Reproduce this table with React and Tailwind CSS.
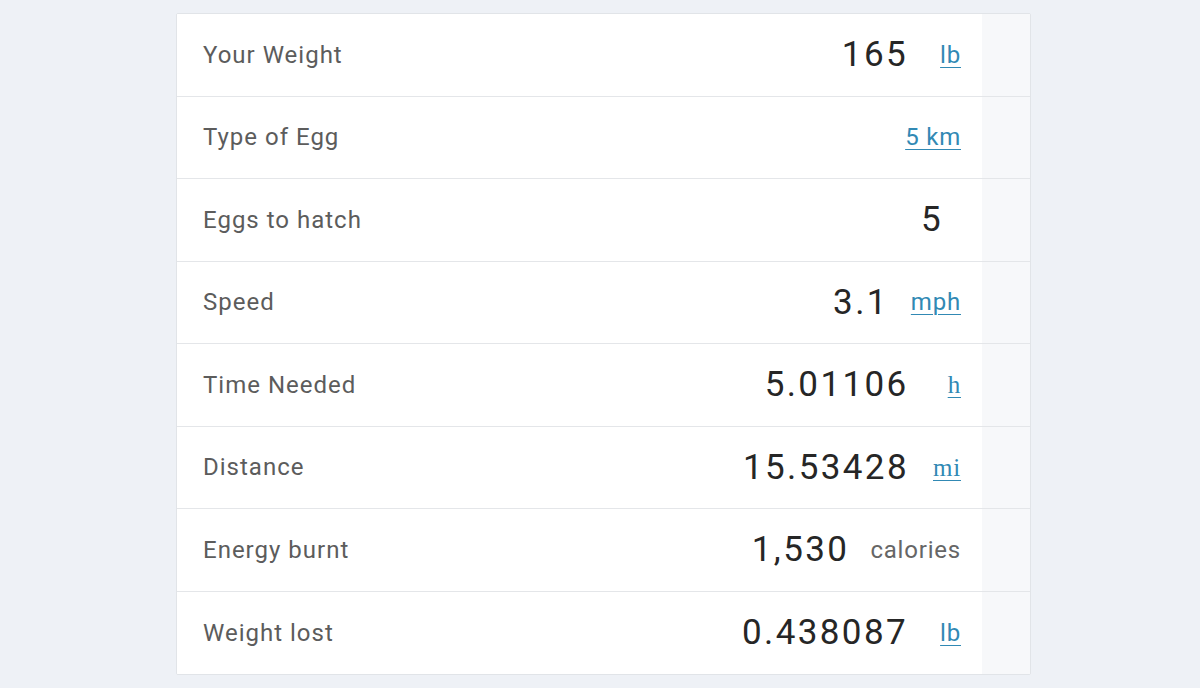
const rows = [
  { label: "Your Weight", value: "165", unit: "lb", link: true, gap: "ml-[32px]" },
  { label: "Type of Egg", value: null, unit: "5 km", link: true, gap: "" },
  { label: "Eggs to hatch", value: "5", unit: null, gap: "", pad: "pr-[18px]" },
  { label: "Speed", value: "3.1", unit: "mph", link: true, gap: "ml-[22px]" },
  { label: "Time Needed", value: "5.01106", unit: "h", link: true, serif: true, gap: "ml-[39px]" },
  { label: "Distance", value: "15.53428", unit: "mi", link: true, serif: true, gap: "ml-[24px]" },
  { label: "Energy burnt", value: "1,530", unit: "calories", link: false, gap: "ml-[21px]" },
  { label: "Weight lost", value: "0.438087", unit: "lb", link: true, gap: "ml-[32px]" },
]

function Row({ row, last }) {
  return (
    <div className={`flex h-[82.5px] ${last ? "" : "border-b border-[#e4e6e9]"}`}>
      <div className="flex flex-1 items-center bg-white pl-[26px] pr-[21px]">
        <span className="text-[24px] text-[#5c5c5c] tracking-[1px]">{row.label}</span>
        <div className={`ml-auto flex items-center ${row.pad ?? ""}`}>
          {row.value && (
            <span className="text-[35px] leading-none text-[#262626] tracking-[2.4px]">{row.value}</span>
          )}
          {row.unit && (
            <span
              className={`${row.gap} text-[24px] tracking-[0.8px] ${
                row.link ? "text-[#3189b4] underline underline-offset-[4px] decoration-1" : "text-[#666]"
              } ${row.serif ? "font-['Liberation_Serif',serif] text-[25px]" : ""}`}
            >
              {row.unit}
            </span>
          )}
        </div>
      </div>
      <div className="w-[48px] bg-[#f7f8fa]" />
    </div>
  )
}

export default function App() {
  return (
    <div className="min-h-[688px] bg-[#eef1f6] pt-[13px] font-['Roboto',sans-serif]">
      <div className="ml-[176px] w-[855px] overflow-hidden rounded-[2px] border border-[#e1e4e8] bg-white">
        {rows.map((row, i) => (
          <Row key={row.label} row={row} last={i === rows.length - 1} />
        ))}
      </div>
    </div>
  )
}
